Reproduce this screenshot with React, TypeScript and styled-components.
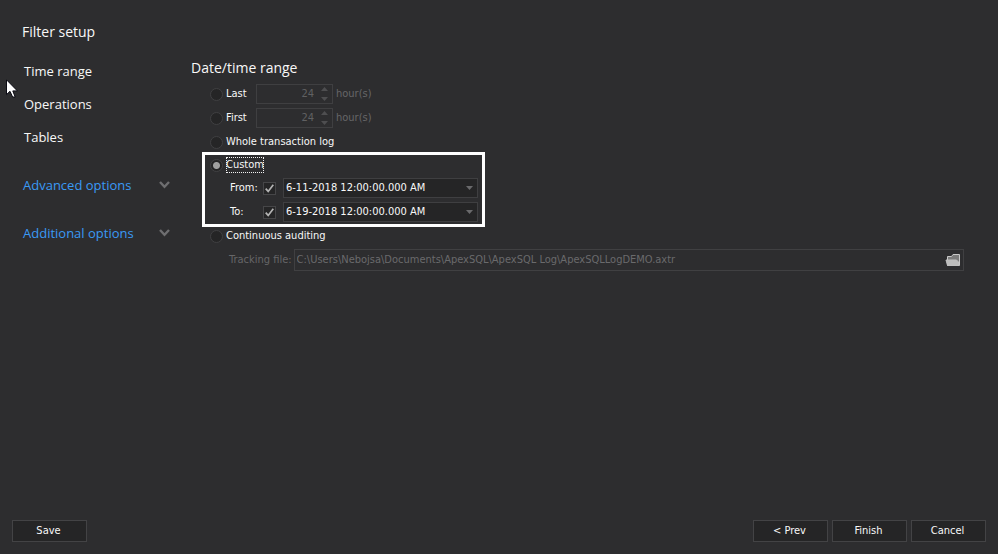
import React, { useState } from "react";
import styled, { createGlobalStyle } from "styled-components";

const ui = `"DejaVu Sans Condensed", "Noto Sans", sans-serif`;
const nav = `"Open Sans", "Noto Sans", sans-serif`;

const GlobalStyle = createGlobalStyle`
  * { box-sizing: border-box; }
  body {
    margin: 0;
    background: #2d2d2f;
    color: #f8f8f8;
    font: 11px/16px ${ui};
  }
  button, input, select { font: inherit; color: inherit; margin: 0; }
`;

const Page = styled.div`
  min-height: 100vh;
  display: flex;
  flex-direction: column;
`;

const Body = styled.div`
  flex: 1;
  display: grid;
  grid-template-columns: 191px minmax(0, 1fr);
`;

const Sidebar = styled.aside`
  position: relative;
  padding: 22px 21px 0 22px;
  font-family: ${nav};
`;

const SidebarTitle = styled.h1`
  margin: 0 0 19px;
  font-size: 14px;
  line-height: 20px;
  font-weight: 400;
`;

const NavList = styled.nav`
  display: flex;
  flex-direction: column;
  gap: 13px;
  padding-left: 2px;
  margin-bottom: 28px;
`;

const NavLink = styled.a`
  font-size: 13px;
  line-height: 20px;
  color: #f8f8f8;
  text-decoration: none;
`;

const Disclosure = styled.button`
  display: flex;
  align-items: center;
  justify-content: space-between;
  width: 100%;
  margin-bottom: 28px;
  padding: 0 0 0 1px;
  border: 0;
  background: none;
  color: #3a9af5;
  font-size: 13px;
  line-height: 20px;
  text-align: left;
`;

const Pointer = styled.svg`
  position: absolute;
  left: 6px;
  top: 79px;
`;

const Main = styled.main`
  padding: 58px 34px 0 0;
`;

const Heading = styled.h2`
  margin: 0 0 4px;
  font: 400 14px/20px ${nav};
`;

const Options = styled.div`
  display: flex;
  flex-direction: column;
  padding-left: 19px;
`;

const Row = styled.div<{ $short?: boolean }>`
  display: flex;
  align-items: center;
  height: ${(p) => (p.$short ? 22 : 24)}px;
`;

const Highlight = styled.div`
  position: relative;
  align-self: flex-start;
  width: 268px;
  &::after {
    content: "";
    position: absolute;
    inset: -2px -7px -3px -8px;
    border: 3px solid #fff;
    pointer-events: none;
  }
`;

const Radio = styled.input.attrs({ type: "radio", name: "range" })`
  appearance: none;
  flex: none;
  width: 13px;
  height: 13px;
  margin: 0 3px 0 0;
  border: 1px solid #404042;
  border-radius: 50%;
  background: #252526;
  outline: none;
  &:checked {
    background: radial-gradient(circle, #a0a0a0 0 3px, #252526 4px);
  }
`;

const RadioLabel = styled.label<{ $wide?: boolean; $focused?: boolean }>`
  ${(p) => (p.$wide ? "width: 30px;" : "")}
  white-space: nowrap;
  outline: ${(p) => (p.$focused ? "1px dotted #f2f2f2" : "none")};
  outline-offset: -1px;
`;

const Spinner = styled.div`
  display: flex;
  align-items: center;
  width: 77px;
  height: 20px;
  margin-right: 3px;
  padding-right: 4px;
  border: 1px solid #3f3f41;
  color: #606062;
`;

const SpinnerInput = styled.input`
  flex: 1;
  min-width: 0;
  padding: 0 7px 0 0;
  border: 0;
  background: none;
  text-align: right;
  appearance: textfield;
  &::-webkit-inner-spin-button { appearance: none; margin: 0; }
`;

const Muted = styled.label`
  color: #666668;
  white-space: nowrap;
`;

const DateLabel = styled.label`
  width: 33px;
  margin-left: 20px;
  white-space: nowrap;
`;

const CheckWrap = styled.span`
  display: grid;
  width: 13px;
  height: 13px;
  margin-right: 7px;
  & > * { grid-area: 1 / 1; }
  svg { pointer-events: none; }
`;

const Check = styled.input.attrs({ type: "checkbox" })`
  appearance: none;
  width: 13px;
  height: 13px;
  border: 1px solid #464648;
  background: #252526;
  & + svg { visibility: hidden; }
  &:checked + svg { visibility: visible; }
`;

const Combo = styled.div`
  flex: 1;
  display: grid;
  align-items: center;
  & > * { grid-area: 1 / 1; }
  svg { justify-self: end; margin-right: 5px; pointer-events: none; }
`;

const Select = styled.select`
  appearance: none;
  width: 100%;
  height: 20px;
  padding: 0 16px 0 2px;
  border: 1px solid #3f3f41;
  border-radius: 0;
  background: #252526;
`;

const PathBox = styled.div`
  flex: 1;
  display: flex;
  align-items: center;
  height: 22px;
  margin-left: 2px;
  padding: 0 2px;
  border: 1px solid #404042;
`;

const PathInput = styled.input`
  flex: 1;
  min-width: 0;
  padding: 0;
  border: 0;
  background: none;
  color: #6a6a6c;
`;

const IconButton = styled.button`
  display: flex;
  padding: 0;
  border: 0;
  background: none;
`;

const TrackingRow = styled(Row)`
  padding-left: 19px;
`;

const Footer = styled.footer`
  display: flex;
  gap: 4px;
  padding: 0 12px 12px;
`;

const Button = styled.button<{ $pushRight?: boolean }>`
  width: 75px;
  height: 22px;
  margin-right: ${(p) => (p.$pushRight ? "auto" : "0")};
  padding: 0 2px 0 0;
  border: 1px solid #434345;
  background: #252526;
`;

function Chevron() {
  return (
    <svg width="11" height="8" viewBox="0 0 11 8" fill="none" stroke="#6e6e70" strokeWidth="2.4">
      <path d="M1 1 L5.5 5.8 L10 1" />
    </svg>
  );
}

function SpinArrows() {
  return (
    <svg width="7" height="14" viewBox="0 0 7 14" fill="#4e4e50">
      <path d="M0 4 L3.5 0 L7 4Z M0 10 L3.5 14 L7 10Z" />
    </svg>
  );
}

function Folder() {
  return (
    <svg width="16" height="14" viewBox="0 0 16 14">
      <path d="M2.5 12.5V3.5H6.5L8 1.5H14.5V12.5Z" fill="#7b7b7b" stroke="#c8c8c8" />
      <path d="M1 7H11.5L13.5 9V12.5H2.5Z" fill="#bdbdbd" stroke="#c0c0c0" />
    </svg>
  );
}

function HoursOption({ id, label }: { id: string; label: string }) {
  return (
    <Row>
      <Radio id={id} />
      <RadioLabel htmlFor={id} $wide>{label}</RadioLabel>
      <Spinner>
        <SpinnerInput id={`${id}-hours`} type="number" defaultValue={24} disabled />
        <SpinArrows />
      </Spinner>
      <Muted htmlFor={`${id}-hours`}>hour(s)</Muted>
    </Row>
  );
}

function DateOption({ id, label, value }: { id: string; label: string; value: string }) {
  const [on, setOn] = useState(true);
  return (
    <Row>
      <DateLabel htmlFor={id}>{label}</DateLabel>
      <CheckWrap>
        <Check aria-label={`Use ${label}`} checked={on} onChange={() => setOn(!on)} />
        <svg width="13" height="13" viewBox="0 0 13 13" fill="none" stroke="#b4b4b4" strokeWidth="1.7">
          <path d="M2.7 6.7 L5.2 9.4 L10.3 2.8" />
        </svg>
      </CheckWrap>
      <Combo>
        <Select id={id} disabled={!on}>
          <option>{value}</option>
        </Select>
        <svg width="7" height="4" viewBox="0 0 7 4" fill="#6a6a6c">
          <path d="M0 0H7L3.5 4Z" />
        </svg>
      </Combo>
    </Row>
  );
}

export default function App() {
  return (
    <Page>
      <GlobalStyle />
      <Body>
        <Sidebar>
          <SidebarTitle>Filter setup</SidebarTitle>
          <NavList>
            <NavLink href="#time">Time range</NavLink>
            <NavLink href="#operations">Operations</NavLink>
            <NavLink href="#tables">Tables</NavLink>
          </NavList>
          <Disclosure>Advanced options<Chevron /></Disclosure>
          <Disclosure>Additional options<Chevron /></Disclosure>
          <Pointer width="12" height="19" viewBox="0 0 12 19">
            <path
              d="M0.5 0.8V15.6L4 12.3L6.6 18H9.2L6.8 11.9H11.4Z"
              fill="#fff"
              stroke="#0b0b14"
            />
          </Pointer>
        </Sidebar>
        <Main>
          <Heading>Date/time range</Heading>
          <Options>
            <HoursOption id="last" label="Last" />
            <HoursOption id="first" label="First" />
            <Row>
              <Radio id="whole" />
              <RadioLabel htmlFor="whole">Whole transaction log</RadioLabel>
            </Row>
            <Highlight>
              <Row $short>
                <Radio id="custom" defaultChecked />
                <RadioLabel htmlFor="custom" $focused>Custom</RadioLabel>
              </Row>
              <DateOption id="from" label="From:" value="6-11-2018 12:00:00.000 AM" />
              <DateOption id="to" label="To:" value="6-19-2018 12:00:00.000 AM" />
            </Highlight>
            <Row>
              <Radio id="continuous" />
              <RadioLabel htmlFor="continuous">Continuous auditing</RadioLabel>
            </Row>
            <TrackingRow>
              <Muted htmlFor="tracking">Tracking file:</Muted>
              <PathBox>
                <PathInput
                  id="tracking"
                  disabled
                  defaultValue={"C:\\Users\\Nebojsa\\Documents\\ApexSQL\\ApexSQL Log\\ApexSQLLogDEMO.axtr"}
                />
                <IconButton aria-label="Browse"><Folder /></IconButton>
              </PathBox>
            </TrackingRow>
          </Options>
        </Main>
      </Body>
      <Footer>
        <Button $pushRight>Save</Button>
        <Button>&lt; Prev</Button>
        <Button>Finish</Button>
        <Button>Cancel</Button>
      </Footer>
    </Page>
  );
}
